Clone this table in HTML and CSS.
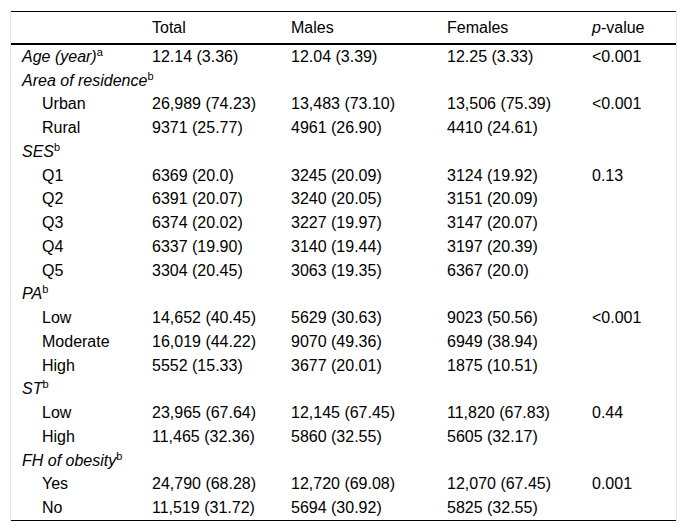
FILE: index.html
```html
<!DOCTYPE html>
<html>
<head>
<meta charset="utf-8">
<link rel="stylesheet" href="styles.css">
</head>
<body>
<div class="wrap">
<table class="data">
<colgroup>
<col class="c1"><col class="c2"><col class="c3"><col class="c4"><col class="c5">
</colgroup>
<thead>
<tr><th></th><th>Total</th><th>Males</th><th>Females</th><th><i>p</i>-value</th></tr>
</thead>
<tbody>
<tr><td class="lab"><i>Age (year)</i><sup>a</sup></td><td>12.14 (3.36)</td><td>12.04 (3.39)</td><td>12.25 (3.33)</td><td>&lt;0.001</td></tr>
<tr><td class="lab"><i>Area of residence</i><sup>b</sup></td><td></td><td></td><td></td><td></td></tr>
<tr><td class="sub">Urban</td><td>26,989 (74.23)</td><td>13,483 (73.10)</td><td>13,506 (75.39)</td><td>&lt;0.001</td></tr>
<tr><td class="sub">Rural</td><td>9371 (25.77)</td><td>4961 (26.90)</td><td>4410 (24.61)</td><td></td></tr>
<tr><td class="lab"><i>SES</i><sup>b</sup></td><td></td><td></td><td></td><td></td></tr>
<tr><td class="sub">Q1</td><td>6369 (20.0)</td><td>3245 (20.09)</td><td>3124 (19.92)</td><td>0.13</td></tr>
<tr><td class="sub">Q2</td><td>6391 (20.07)</td><td>3240 (20.05)</td><td>3151 (20.09)</td><td></td></tr>
<tr><td class="sub">Q3</td><td>6374 (20.02)</td><td>3227 (19.97)</td><td>3147 (20.07)</td><td></td></tr>
<tr><td class="sub">Q4</td><td>6337 (19.90)</td><td>3140 (19.44)</td><td>3197 (20.39)</td><td></td></tr>
<tr><td class="sub">Q5</td><td>3304 (20.45)</td><td>3063 (19.35)</td><td>6367 (20.0)</td><td></td></tr>
<tr><td class="lab"><i>PA</i><sup>b</sup></td><td></td><td></td><td></td><td></td></tr>
<tr><td class="sub">Low</td><td>14,652 (40.45)</td><td>5629 (30.63)</td><td>9023 (50.56)</td><td>&lt;0.001</td></tr>
<tr><td class="sub">Moderate</td><td>16,019 (44.22)</td><td>9070 (49.36)</td><td>6949 (38.94)</td><td></td></tr>
<tr><td class="sub">High</td><td>5552 (15.33)</td><td>3677 (20.01)</td><td>1875 (10.51)</td><td></td></tr>
<tr><td class="lab"><i>ST</i><sup>b</sup></td><td></td><td></td><td></td><td></td></tr>
<tr><td class="sub">Low</td><td>23,965 (67.64)</td><td>12,145 (67.45)</td><td>11,820 (67.83)</td><td>0.44</td></tr>
<tr><td class="sub">High</td><td>11,465 (32.36)</td><td>5860 (32.55)</td><td>5605 (32.17)</td><td></td></tr>
<tr><td class="lab"><i>FH of obesity</i><sup>b</sup></td><td></td><td></td><td></td><td></td></tr>
<tr><td class="sub">Yes</td><td>24,790 (68.28)</td><td>12,720 (69.08)</td><td>12,070 (67.45)</td><td>0.001</td></tr>
<tr><td class="sub">No</td><td>11,519 (31.72)</td><td>5694 (30.92)</td><td>5825 (32.55)</td><td></td></tr>
</tbody>
</table>
</div>
</body>
</html>
```
FILE: styles.css
```css
html, body {
  margin: 0;
  padding: 0;
  background: #fff;
}
body {
  font-family: "Liberation Sans", Arial, sans-serif;
  font-size: 16px;
  color: #000;
}
.wrap {
  margin: 11px 0 0 10px;
  width: 665px;
  border-left: 1px solid #e4e4e4;
  border-right: 1px solid #e4e4e4;
}
.data {
  width: 665px;
  table-layout: fixed;
  border-collapse: separate;
  border-spacing: 0;
  border-top: 1px solid #000;
  border-bottom: 1px solid #000;
}
.c1 { width: 141px; }
.c2 { width: 139px; }
.c3 { width: 156px; }
.c4 { width: 145px; }
.c5 { width: 84px; }
.data th {
  font-weight: normal;
  text-align: left;
  height: 31px;
  padding: 0;
  line-height: 18px;
  border-bottom: 2px solid #000;
  vertical-align: middle;
}
.data td {
  height: 23.75px;
  padding: 0;
  line-height: 18px;
  vertical-align: middle;
  white-space: nowrap;
}
.data th:first-child, .data td.lab {
  padding-left: 11px;
}
.data td.sub {
  padding-left: 31px;
}
sup {
  font-size: 11px;
  line-height: 0;
  vertical-align: 6px;
}
```
